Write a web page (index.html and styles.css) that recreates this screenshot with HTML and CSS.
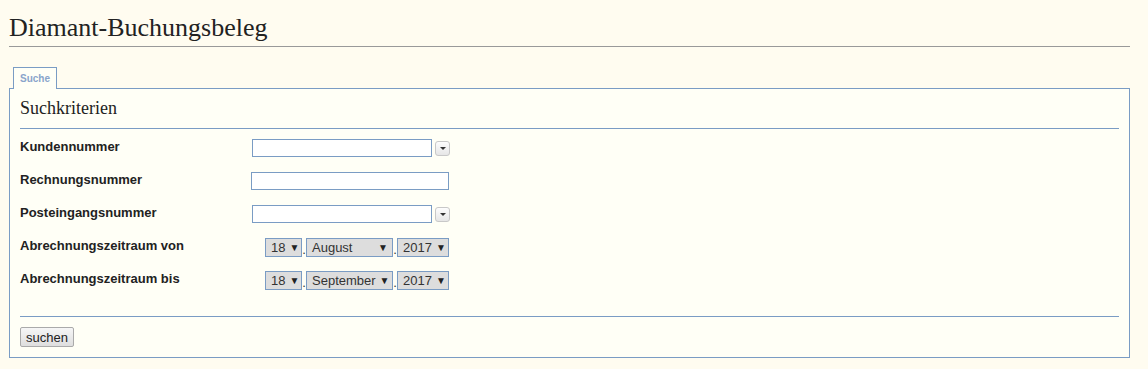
FILE: index.html
```html
<!DOCTYPE html>
<html lang="de">
<head>
    <meta charset="utf-8">
    <title>Diamant-Buchungsbeleg</title>
    <link rel="stylesheet" href="styles.css">
</head>
<body>
    <h1 class="page-title">Diamant-Buchungsbeleg</h1>

    <div class="tabs">
        <ul class="tab-list">
            <li class="tab active">Suche</li>
        </ul>
        <div class="tab-panel">
            <h2 class="section-title">Suchkriterien</h2>

            <form class="search-form">
                <div class="form-row">
                    <label class="field-label">Kundennummer</label>
                    <div class="field">
                        <input type="text" class="text-input combo">
                        <button type="button" class="combo-btn"><span class="caret"></span></button>
                    </div>
                </div>
                <div class="form-row">
                    <label class="field-label">Rechnungsnummer</label>
                    <div class="field">
                        <input type="text" class="text-input wide">
                    </div>
                </div>
                <div class="form-row">
                    <label class="field-label">Posteingangsnummer</label>
                    <div class="field">
                        <input type="text" class="text-input combo">
                        <button type="button" class="combo-btn"><span class="caret"></span></button>
                    </div>
                </div>
                <div class="form-row">
                    <label class="field-label">Abrechnungszeitraum von</label>
                    <div class="field date-field">
                        <span class="select day">18 <i>▼</i></span><span class="dot">.</span><span class="select month">August <i>▼</i></span><span class="dot">.</span><span class="select year">2017 <i>▼</i></span>
                    </div>
                </div>
                <div class="form-row">
                    <label class="field-label">Abrechnungszeitraum bis</label>
                    <div class="field date-field">
                        <span class="select day">18 <i>▼</i></span><span class="dot">.</span><span class="select month">September <i>▼</i></span><span class="dot">.</span><span class="select year">2017 <i>▼</i></span>
                    </div>
                </div>

                <div class="form-actions">
                    <button type="submit" class="submit-btn">suchen</button>
                </div>
            </form>
        </div>
    </div>
</body>
</html>
```

FILE: styles.css
```css
* {
    box-sizing: border-box;
}

body {
    margin: 0;
    padding: 13px 18px 0 9px;
    background-color: #fffcf0;
    color: #222;
    font-family: "Liberation Sans", Arial, sans-serif;
}

.page-title {
    font-family: "Liberation Serif", Georgia, serif;
    font-weight: normal;
    font-size: 26px;
    line-height: 30px;
    margin: 0;
    padding-bottom: 3px;
    border-bottom: 1px solid #999;
    color: #222;
}

.tabs {
    margin-top: 20px;
}

.tab-list {
    list-style: none;
    margin: 0;
    padding: 0 0 0 4px;
    display: flex;
}

.tab {
    font-size: 10px;
    font-weight: bold;
    color: #8aa5cb;
    padding: 0 6px;
    height: 22px;
    line-height: 21px;
    border: 1px solid #7a9cc4;
    border-bottom: none;
    background-color: #fffff6;
    position: relative;
    margin-bottom: -1px;
    z-index: 1;
}

.tab-panel {
    border: 1px solid #7a9cc4;
    background-color: #fffff6;
    padding: 8px 10px 10px 10px;
}

.section-title {
    font-family: "Liberation Serif", Georgia, serif;
    font-weight: normal;
    font-size: 18px;
    line-height: 22px;
    margin: 0;
    padding-bottom: 9px;
    border-bottom: 1px solid #7a9cc4;
    color: #222;
}

.search-form {
    margin: 0;
}

.form-row {
    display: flex;
    align-items: flex-start;
    height: 33px;
}

.form-row:first-child {
    margin-top: 10px;
}

.field-label {
    width: 231px;
    font-size: 13px;
    font-weight: bold;
    color: #222;
}

.field {
    display: flex;
    align-items: center;
    gap: 3px;
}

.text-input {
    height: 18px;
    border: 1px solid #7a9cc4;
    background-color: #fff;
    padding: 0 3px;
    font-size: 12px;
    margin: 0;
}

.text-input.combo {
    width: 180px;
    margin-left: 1px;
}

.text-input.wide {
    width: 198px;
}

.combo-btn {
    width: 15px;
    height: 15px;
    padding: 0;
    border: 1px solid #c8c8c8;
    border-radius: 3px;
    background: linear-gradient(#fdfdfd, #e6e6e6);
    display: flex;
    align-items: center;
    justify-content: center;
}

.caret {
    width: 0;
    height: 0;
    border-left: 3px solid transparent;
    border-right: 3px solid transparent;
    border-top: 3px solid #333;
}

.date-field {
    gap: 0;
    margin-left: 14px;
}

.select {
    display: inline-flex;
    align-items: center;
    justify-content: space-between;
    height: 19px;
    border: 1px solid #7a9cc4;
    background-color: #ddd;
    font-size: 13px;
    color: #333;
    padding: 0 4px 0 5px;
}

.select i {
    font-style: normal;
    font-size: 10px;
    color: #222;
    margin-left: 4px;
}

.select.day {
    width: 37px;
}

.select.month {
    width: 87px;
}

.select.year {
    width: 52px;
}

.dot {
    font-size: 13px;
    color: #333;
    width: 4px;
    text-align: center;
    align-self: flex-end;
    line-height: 14px;
}

.form-actions {
    margin-top: 12px;
    border-top: 1px solid #7a9cc4;
    padding-top: 10px;
}

.submit-btn {
    font-family: "Liberation Sans", Arial, sans-serif;
    font-size: 13px;
    color: #222;
    height: 20px;
    padding: 0 5px;
    border: 1px solid #aaa;
    border-radius: 2px;
    background: linear-gradient(#f6f6f6, #dedede);
}
```
